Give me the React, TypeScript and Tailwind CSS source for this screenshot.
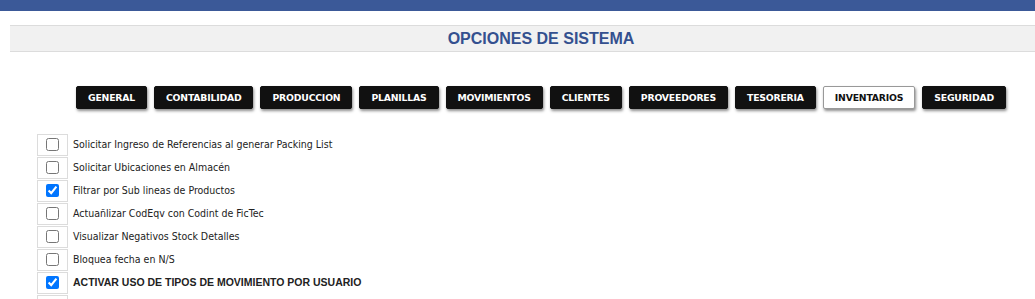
import { useState } from "react";

const TABS = [
  "GENERAL",
  "CONTABILIDAD",
  "PRODUCCION",
  "PLANILLAS",
  "MOVIMIENTOS",
  "CLIENTES",
  "PROVEEDORES",
  "TESORERIA",
  "INVENTARIOS",
  "SEGURIDAD",
];

const OPTIONS: { label: string; checked: boolean; bold?: boolean }[] = [
  { label: "Solicitar Ingreso de Referencias al generar Packing List", checked: false },
  { label: "Solicitar Ubicaciones en Almacén", checked: false },
  { label: "Filtrar por Sub lineas de Productos", checked: true },
  { label: "Actuañlizar CodEqv con Codint de FicTec", checked: false },
  { label: "Visualizar Negativos Stock Detalles", checked: false },
  { label: "Bloquea fecha en N/S", checked: false },
  { label: "ACTIVAR USO DE TIPOS DE MOVIMIENTO POR USUARIO", checked: true, bold: true },
  { label: "Controlar Stock por Lote", checked: true },
];

export default function App() {
  const [active, setActive] = useState("INVENTARIOS");
  const [opts, setOpts] = useState(OPTIONS);

  const toggle = (i: number) =>
    setOpts((o) => o.map((x, j) => (j === i ? { ...x, checked: !x.checked } : x)));

  return (
    <div className="w-[1035px] h-[299px] overflow-hidden bg-white">
      <div className="h-[11px] bg-[#3b5998]" />

      <div className="ml-[10px] mt-[14px] h-[27px] bg-[#f1f1f1] border-y border-[#dcdcdc] flex items-center justify-center pl-[37px]">
        <span className="font-['Liberation_Sans',Arial,sans-serif] font-bold text-[16px] text-[#34508f]">
          OPCIONES DE SISTEMA
        </span>
      </div>

      <div className="flex gap-[7px] pl-[76px] mt-[34px]">
        {TABS.map((t) => {
          const on = t === active;
          return (
            <button
              key={t}
              onClick={() => setActive(t)}
              className={
                on
                  ? "h-[23px] px-[11px] bg-white text-[#111] border border-[#999] rounded-[2px] shadow-[1px_2px_3px_rgba(0,0,0,0.45)] font-['DejaVu_Sans',Verdana,sans-serif] font-bold text-[9.3px] tracking-[-0.2px]"
                  : "h-[23px] px-[11px] bg-[#111] text-white border border-[#111] rounded-[2px] shadow-[1px_2px_3px_rgba(0,0,0,0.45)] font-['DejaVu_Sans',Verdana,sans-serif] font-bold text-[9.3px] tracking-[-0.2px]"
              }
            >
              {t}
            </button>
          );
        })}
      </div>

      <div className="mt-[24px] pl-[37px] flex flex-col">
        {opts.map((o, i) => (
          <div key={i} className="flex items-center h-[23px]">
            <div className="w-[31px] h-[22px] border border-[#dcdcdc] flex items-center justify-center">
              <input
                type="checkbox"
                checked={o.checked}
                onChange={() => toggle(i)}
                className="w-[13px] h-[13px] m-0"
              />
            </div>
            <span
              className={
                o.bold
                  ? "ml-[5px] font-['Liberation_Sans',Arial,sans-serif] font-bold text-[10.5px] text-[#222]"
                  : "ml-[5px] font-['DejaVu_Sans_Condensed','Liberation_Sans',sans-serif] text-[10.5px] text-[#222]"
              }
            >
              {o.label}
            </span>
          </div>
        ))}
      </div>
    </div>
  );
}
